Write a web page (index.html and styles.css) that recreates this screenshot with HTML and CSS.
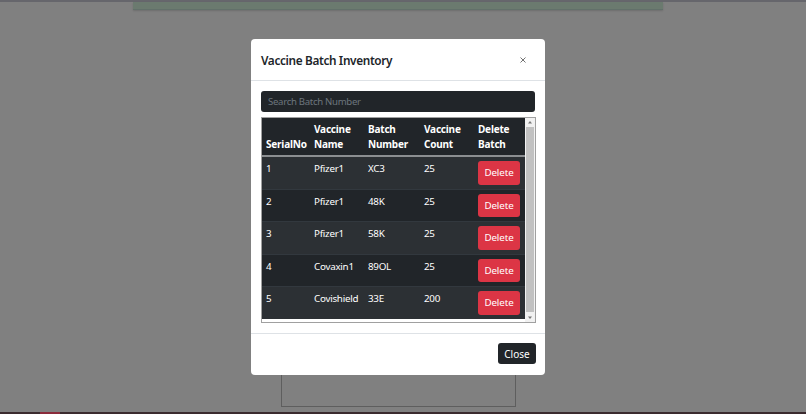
FILE: index.html
```html
<!DOCTYPE html>
<html lang="en">
<head>
<meta charset="utf-8">
<title>Vaccine Batch Inventory</title>
<link rel="stylesheet" href="styles.css">
</head>
<body>
<div class="page">
  <div class="topline"></div>
  <div class="topbox"></div>
  <div class="bottombox"></div>
  <div class="bottomline"></div>
</div>

<div class="modal">
  <div class="modal-header">
    <h5 class="modal-title">Vaccine Batch Inventory</h5>
    <button class="btn-close" aria-label="Close">
      <svg width="6" height="6" viewBox="0 0 6 6"><path d="M0.5 0.5 L5.5 5.5 M5.5 0.5 L0.5 5.5" stroke="#444" stroke-width="1"/></svg>
    </button>
  </div>
  <div class="modal-body">
    <input class="search" type="text" placeholder="Search Batch Number">
    <div class="table-wrap">
      <div class="table-scroll">
        <table class="inv">
          <thead>
            <tr>
              <th class="c1">SerialNo</th>
              <th class="c2">Vaccine Name</th>
              <th class="c3">Batch Number</th>
              <th class="c4">Vaccine Count</th>
              <th class="c5">Delete Batch</th>
            </tr>
          </thead>
          <tbody>
            <tr><td>1</td><td>Pfizer1</td><td>XC3</td><td>25</td><td><button class="btn-del">Delete</button></td></tr>
            <tr><td>2</td><td>Pfizer1</td><td>48K</td><td>25</td><td><button class="btn-del">Delete</button></td></tr>
            <tr><td>3</td><td>Pfizer1</td><td>58K</td><td>25</td><td><button class="btn-del">Delete</button></td></tr>
            <tr><td>4</td><td>Covaxin1</td><td>89OL</td><td>25</td><td><button class="btn-del">Delete</button></td></tr>
            <tr><td>5</td><td>Covishield</td><td>33E</td><td>200</td><td><button class="btn-del">Delete</button></td></tr>
          </tbody>
        </table>
      </div>
      <div class="vscroll" aria-hidden="true">
        <svg class="arrow" width="10" height="8" viewBox="0 0 10 8"><path d="M3 5.5 L5 3 L7 5.5 Z" fill="#777"/></svg>
        <div class="track"><div class="thumb"></div></div>
        <svg class="arrow" width="10" height="8" viewBox="0 0 10 8"><path d="M3 2.5 L5 5 L7 2.5 Z" fill="#777"/></svg>
      </div>
    </div>
  </div>
  <div class="modal-footer">
    <button class="btn-close-dark">Close</button>
  </div>
</div>
</body>
</html>
```

FILE: styles.css
```css
* { box-sizing: border-box; }
html, body {
  margin: 0;
  padding: 0;
  height: 100%;
  overflow: hidden;
}
body {
  background: #808080;
  font-family: "Noto Sans", "Open Sans", "Liberation Sans", sans-serif;
  color: #212529;
}
.page {
  height: 414px;
  display: flex;
  flex-direction: column;
}
.topline {
  height: 2px;
  background: #66666c;
}
.topbox {
  margin-left: 133px;
  width: 530px;
  height: 8px;
  background: #6b7a6f;
  border-bottom: 1px solid #62706a;
  box-shadow: 0 1px 2px rgba(0,0,0,0.15);
}
.bottombox {
  margin-top: auto;
  margin-left: 281px;
  width: 235px;
  height: 40px;
  border: 1px solid #5e5e5e;
  border-top: none;
  margin-bottom: 5px;
}
.bottomline {
  height: 2px;
  background: linear-gradient(to right, #3a2a2e 0 40px, #8a2a3a 40px 60px, #3a2a2e 60px);
}

/* modal */
.modal {
  position: fixed;
  top: 39px;
  left: 251px;
  width: 294px;
  background: #fff;
  border-radius: 4px;
  display: flex;
  flex-direction: column;
}
.modal-header {
  display: flex;
  align-items: center;
  justify-content: space-between;
  padding: 10px 10px;
  border-bottom: 1px solid #dee2e6;
  height: 42px;
}
.modal-title {
  margin: 0;
  font-size: 11.8px;
  font-weight: 600;
  letter-spacing: -0.35px;
  line-height: 20px;
  color: #212529;
}
.btn-close {
  border: none;
  background: transparent;
  padding: 0;
  margin-right: 8px;
  width: 8px;
  height: 8px;
  display: flex;
  align-items: center;
  justify-content: center;
  opacity: 0.75;
}
.modal-body {
  padding: 10px 9px 10px 10px;
  display: flex;
  flex-direction: column;
  gap: 5px;
}
.search {
  height: 21px;
  width: 274px;
  background: #212529;
  border: none;
  border-radius: 3px;
  padding: 0 7px;
  font-family: inherit;
  font-size: 9.6px;
  letter-spacing: -0.3px;
  color: #fff;
  outline: none;
}
.search::placeholder { color: #6c757d; }

.table-wrap {
  width: 275px;
  height: 206px;
  border: 1px solid #a0a0a0;
  background: #fff;
  display: flex;
}
.table-scroll {
  flex: 1;
  overflow: hidden;
}
.vscroll {
  width: 10px;
  display: flex;
  flex-direction: column;
  background: #f1f1f1;
}
.arrow { display: block; flex: none; }
.track {
  flex: 1;
  padding: 1px 1px 2px;
  display: flex;
}
.thumb {
  flex: 1;
  background: #c1c1c1;
}

.inv {
  width: 264px;
  table-layout: fixed;
  border-collapse: collapse;
  background: #212529;
  color: #fff;
  font-size: 9.8px;
  letter-spacing: -0.25px;
  margin-bottom: 16px;
}
.inv th {
  text-align: left;
  vertical-align: bottom;
  font-weight: 700;
  font-size: 10px;
  letter-spacing: -0.2px;
  line-height: 14.5px;
  padding: 4px 4px 4px 4px;
  border-bottom: 2px solid #8b8e91;
}
.inv .c1 { width: 48px; }
.inv .c2 { width: 54px; }
.inv .c3 { width: 56px; }
.inv .c4 { width: 54px; }
.inv .c5 { width: 52px; }
.inv td {
  vertical-align: top;
  line-height: 15px;
  padding: 4px;
  border-bottom: 1px solid #32383e;
  white-space: nowrap;
}
.inv tbody tr:nth-child(odd) td { background: #2c3034; }
.inv tbody tr:last-child td { border-bottom: none; }
.btn-del {
  display: block;
  height: 23.5px;
  width: 42px;
  padding: 0;
  border: none;
  border-radius: 3px;
  background: #dc3545;
  color: #fff;
  font-family: inherit;
  font-size: 9.8px;
  letter-spacing: -0.1px;
}

.modal-footer {
  border-top: 1px solid #dee2e6;
  display: flex;
  justify-content: flex-end;
  padding: 9px 9px 11px 10px;
}
.btn-close-dark {
  height: 21px;
  width: 38px;
  padding: 0;
  border: none;
  border-radius: 3px;
  background: #212529;
  color: #fff;
  font-family: inherit;
  font-size: 10px;
}
```
